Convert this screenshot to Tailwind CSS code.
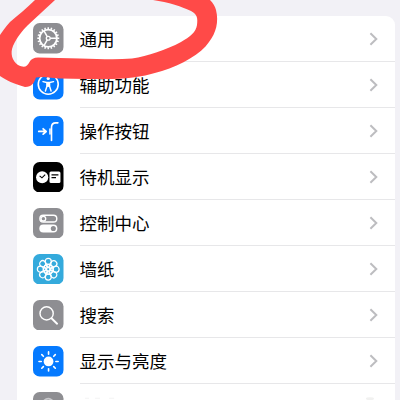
<!DOCTYPE html>
<html lang="zh-CN"><head><meta charset="utf-8"><title>设置</title>
<script src="https://cdn.jsdelivr.net/npm/@tailwindcss/browser@4"></script></head>
<body class="bg-[#f2f1f6] overflow-hidden">
<main class="relative h-[400px] w-[400px] overflow-hidden pl-[17px] pr-[5px] pt-[15.6px] font-['Liberation_Sans','Noto_Sans_CJK_SC',sans-serif] text-[17.5px] text-black">
<ul id="list" class="rounded-t-[9px] bg-white pl-4"></ul>
<svg class="absolute left-0 top-0" width="400" height="100" viewBox="0 0 400 100"><path fill="#ff4a48" d="M35 0C27 8 18 15 10 22C6 26 3 31 0 35V76C6 80 14 84 25 87C32 87 34 83 36 77.500C44 76 52 78 60 78.500C78 79 95 79 112 79C132 78.500 148 75.500 162 71C182 64.500 201 54 209 42C216 33 219 22 216 10C215 6 213 3 210 0H153C168 2 183 7 191 11C197 14 198 18 197 25C196 32 190 37 181 42C166 50 148 56 132 58.5C116 60 99 59 80 58.500L38 57.500C34 57.500 31 59 29.500 62C27 67 24 68 18 65C12 61 10 53 13 46C17 37 22 31 28 25L55 0Z"/></svg>
</main>
<script>
const gear=()=>{let s='';for(let i=0;i<20;i++)s+=`<path d="M15 4.2V6.2" stroke-width="1.5" transform="rotate(${i*18} 15 15)"/>`;
return s+'<circle cx="15" cy="15" r="8.5" stroke-width="1.8"/><circle cx="15" cy="15" r="1.9" stroke-width="1.3"/><path d="M17 15H23.5M14 13.3L10.7 7.6M14 16.7L10.7 22.4" stroke-width="1.5"/>'};
const flower=()=>{let s='';for(let i=0;i<8;i++)s+=`<circle cx="15" cy="7.3" r="3" transform="rotate(${i*45} 15 15)"/><circle cx="15" cy="11.8" r="1.7" transform="rotate(${i*45} 15 15)"/>`;
return `<g stroke-width="1.2">${s}</g>`};
const sun=()=>{let s='<circle cx="15.3" cy="15.2" r="4.8" fill="#fff" stroke="none"/>';for(let i=0;i<8;i++)s+=`<path d="M15.3 5.8V8" stroke-width="1.6" stroke-linecap="round" transform="rotate(${i*45} 15.3 15.2)"/>`;return s};
const rows=[
['通用','#8e8e92',gear()],
['辅助功能','#057aff','<circle cx="15" cy="15" r="9.8" stroke-width="1.6"/><circle cx="15" cy="9.3" r="1.6" fill="#fff" stroke="none"/><path d="M9.8 12.4L13.5 13.2H16.5L20.2 12.4M13.7 13.5V17L12.2 21.6M16.3 13.5V17L17.8 21.6" stroke-width="1.4" stroke-linecap="round"/><path d="M13.4 12.8h3.2v4.8h-3.2z" fill="#fff" stroke="none"/>'],
['操作按钮','#057aff','<path d="M5.700 15.2H12M10 12.600L12.900 15.2L10 17.800" stroke-width="1.8" stroke-linecap="round" stroke-linejoin="round"/><path d="M24.5 6.7H22.5Q18.2 6.7 18.2 11V24" stroke-width="1.6" stroke-linecap="round"/><path d="M16.7 12.7V17.7" stroke-width="1.5" stroke-linecap="round"/>'],
['待机显示','#000000','<circle cx="9" cy="15" r="6" fill="#fff" stroke="none"/><path d="M6.5 13.6L8.8 15.6L12 12.4" stroke="#000" stroke-width="1.1"/><rect x="16.2" y="9.3" width="10.8" height="11.4" rx="1.5" fill="#fff" stroke="none"/><path d="M18.2 12.7H25M18.2 15.4H22.6" stroke="#000" stroke-width="1.1"/>'],
['控制中心','#8e8e92','<rect x="6.8" y="7.2" width="16.6" height="6.6" rx="3.3" stroke-width="1.4"/><circle cx="10.2" cy="10.5" r="2.3" stroke-width="1.3"/><rect x="6.2" y="16.2" width="17.8" height="7.8" rx="3.9" fill="#fff" stroke="none"/><circle cx="20" cy="20.1" r="2.5" fill="#8e8e92" stroke="none"/>'],
['墙纸','#34aadc',flower()],
['搜索','#8e8e92','<circle cx="13.4" cy="13.2" r="6.5" stroke-width="1.4"/><path d="M18.2 18L23.7 23.3" stroke-width="1.9" stroke-linecap="round"/>'],
['显示与亮度','#057aff',sun()],
['','#8e8e92','<path d="M11 8.300Q15 4.800 19 8.300" stroke="#c8c8cb" stroke-width="1.6"/>']];
document.getElementById('list').innerHTML=rows.map(([t,c,i])=>`<li class="flex h-[46.1px] items-center">
<svg class="h-[30.5px] w-[30.5px] shrink-0" viewBox="0 0 30 30" fill="none" stroke="#fff"><rect width="30" height="30" rx="6.5" fill="${c}" stroke="none"/>${i}</svg>
<div class="ml-[16.5px] flex h-full grow items-center justify-between border-b border-[#e7e7e9] pr-4">${t?`<span class="-ml-[0.5px] pt-[3.4px] leading-6">${t}</span>
<svg class="mr-px mt-px h-[14px] w-[9px]" viewBox="0 0 9 14" fill="none" stroke="#bdbdc0" stroke-width="2"><path d="M1.4 1.3L7.3 7L1.4 12.7"/></svg>`:`<svg class="h-full w-full" viewBox="0 0 298 46" preserveAspectRatio="none"><path d="M5 14.500H9M15 14.500H20M29 14.500H34" stroke="#f3f3f4" stroke-width="1"/><ellipse cx="289" cy="15" rx="4" ry="1.500" fill="#f1f1f0"/></svg>`}</div></li>`).join('');
</script></body></html>
